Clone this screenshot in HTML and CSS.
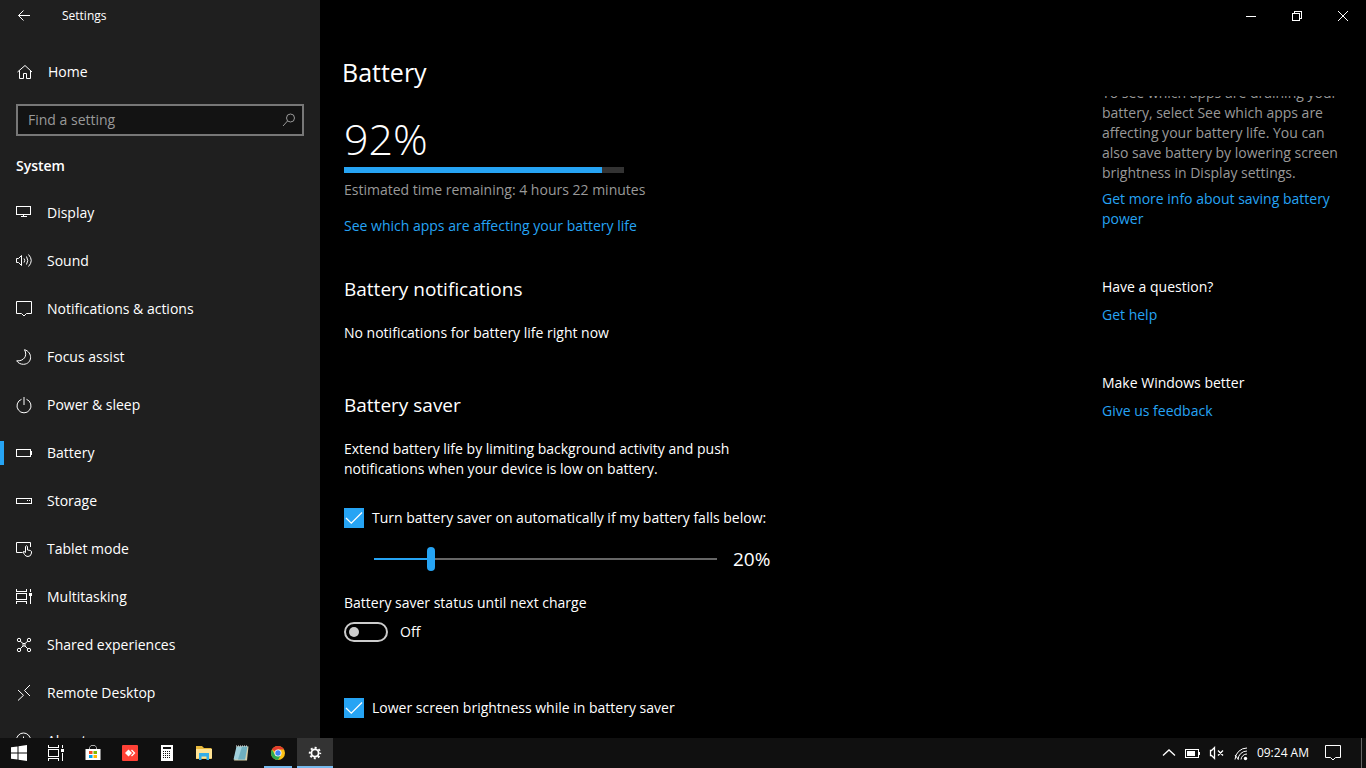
FILE: index.html
```html
<!DOCTYPE html>
<html lang="en">
<head>
    <meta charset="UTF-8">
    <meta name="viewport" content="width=device-width, initial-scale=1">
    <title>Settings</title>
    <link rel="stylesheet" href="styles.css">
</head>
<body>
    <div class="window">
        <aside class="sidebar">
            <div class="title-row">
                <button class="back" type="button" aria-label="Back">
                    <svg class="icon" viewBox="0 0 16 16"><path d="M2.500 7.500H14M7.500 2.500L2.500 7.500L7.500 12.500"/></svg>
                </button>
                <span>Settings</span>
            </div>
            <a class="nav-item home" href="#">
                <svg class="icon" viewBox="0 0 16 16"><path d="M1.500 8L9 1.500L16 8M3.500 6.500V14.500H7.500V9.500H10.500V14.500H14.500V6.500"/></svg>
                <span>Home</span>
            </a>
            <div class="search">
                <input type="text" placeholder="Find a setting" aria-label="Find a setting">
                <svg class="icon" viewBox="0 0 16 16"><circle cx="9.500" cy="6" r="4"/><path d="M6.500 9L2 14"/></svg>
            </div>
            <h2 class="group">System</h2>
            <nav class="nav">
                <a class="nav-item" href="#">
                    <svg class="icon crisp" viewBox="0 0 16 16"><path d="M0.500 1.500H14.500V9.500H0.500ZM7.500 10V11.500M4.500 11.500H10.500"/></svg>
                    <span>Display</span>
                </a>
                <a class="nav-item" href="#">
                    <svg class="icon" viewBox="0 0 16 16"><path d="M0.500 5.500H2.500L5.500 2.500V12.500L2.500 9.500H0.500ZM8 5.500Q9.500 7.500 8 9.500M10.500 3.500Q13 7.500 10.500 11.500M12.500 1.500Q18 7.500 12.500 13.500"/></svg>
                    <span>Sound</span>
                </a>
                <a class="nav-item" href="#">
                    <svg class="icon" viewBox="0 0 16 16"><path d="M0.500 0.500H15.500V12.500H10.500L8 15L5.500 12.500H0.500Z"/></svg>
                    <span>Notifications &amp; actions</span>
                </a>
                <a class="nav-item" href="#">
                    <svg class="icon" viewBox="0 0 16 16"><path d="M8.500 0.700C17 3 16.500 15 7.500 15.300C4.500 15.300 2 14 0.700 11.800C7.500 12.500 12 7 8.500 0.700Z"/></svg>
                    <span>Focus assist</span>
                </a>
                <a class="nav-item" href="#">
                    <svg class="icon" viewBox="0 0 16 16"><path d="M5.500 2.300A7 7 0 1 0 10.500 2.300M8 0V8"/></svg>
                    <span>Power &amp; sleep</span>
                </a>
                <a class="nav-item active" href="#">
                    <svg class="icon crisp" viewBox="0 0 16 16"><path d="M0.500 4.500H14.500V11.500H0.500ZM15.500 6V10"/></svg>
                    <span>Battery</span>
                </a>
                <a class="nav-item" href="#">
                    <svg class="icon crisp" viewBox="0 0 16 16"><path d="M0.500 5.500H15.500V10.500H0.500ZM11 7.500H12M13 7.500H14"/></svg>
                    <span>Storage</span>
                </a>
                <a class="nav-item" href="#">
                    <svg class="icon" viewBox="0 0 16 16"><path d="M6.500 11.500H0.500V1.500H14.500V6M9.500 11.500V5.500Q10.500 4 11.500 5.500V9L14.500 9.500Q15.500 10 15.500 11V12Q15 15.500 12 15.500Q9.500 15.500 8.500 13.500L7 11Q7.500 9.500 9.500 11.500"/></svg>
                    <span>Tablet mode</span>
                </a>
                <a class="nav-item" href="#">
                    <svg class="icon crisp" viewBox="0 0 16 16"><path d="M0.500 0V2.500H10.500V0M0.500 4.500H10.500V10.500H0.500ZM0.500 15V12.500H10.500V15M14.500 0V3M14.500 7V15"/><path class="solid" d="M13 4H16V7H13Z"/></svg>
                    <span>Multitasking</span>
                </a>
                <a class="nav-item" href="#">
                    <svg class="icon" viewBox="0 0 16 16"><circle cx="3" cy="3" r="1.700"/><circle cx="13" cy="3" r="1.700"/><circle cx="3" cy="13" r="1.700"/><circle cx="13" cy="13" r="1.700"/><path d="M4.200 4.200L7 6.500H9L11.800 4.200M4.200 11.800L7 9H9L11.800 11.800M7 6.500V9M9 6.500V9"/></svg>
                    <span>Shared experiences</span>
                </a>
                <a class="nav-item" href="#">
                    <svg class="icon" viewBox="0 0 16 16"><path d="M2 5L7.500 10.300L2 15.500M14 0L8.500 5.500L14 11"/></svg>
                    <span>Remote Desktop</span>
                </a>
                <a class="nav-item" href="#">
                    <svg class="icon" viewBox="0 0 16 16"><circle cx="7.500" cy="7" r="7"/><path d="M7.500 3.500V5M7.500 6V11"/></svg>
                    <span>About</span>
                </a>
            </nav>
        </aside>

        <main class="main">
            <div class="window-buttons">
                <button type="button" aria-label="Minimize"><svg class="caption crisp" viewBox="0 0 10 10"><path d="M0 5.500H10"/></svg></button>
                <button type="button" aria-label="Restore"><svg class="caption crisp" viewBox="0 0 10 10"><path d="M0.500 2.500H7.500V9.500H0.500ZM2.500 2V0.500H9.500V7.500H8"/></svg></button>
                <button type="button" aria-label="Close"><svg class="caption" viewBox="0 0 10 10"><path d="M0 0L10 10M10 0L0 10"/></svg></button>
            </div>
            <h1 class="page-title">Battery</h1>
            <div class="columns">
                <div class="content">
                    <div class="level">92%</div>
                    <div class="level-bar"><div class="level-fill" style="width: 92%"></div></div>
                    <p class="muted estimate">Estimated time remaining: 4 hours 22 minutes</p>
                    <a class="usage-link" href="#">See which apps are affecting your battery life</a>

                    <h2>Battery notifications</h2>
                    <p>No notifications for battery life right now</p>

                    <h2 class="saver-title">Battery saver</h2>
                    <p>Extend battery life by limiting background activity and push notifications when your device is low on battery.</p>

                    <label class="check first-check">
                        <input type="checkbox" checked>
                        <span>Turn battery saver on automatically if my battery falls below:</span>
                    </label>
                    <div class="slider">
                        <input type="range" min="5" max="100" value="20" aria-label="Battery saver threshold">
                        <output>20%</output>
                    </div>
                    <label for="saver-status">Battery saver status until next charge</label>
                    <div class="toggle">
                        <input type="checkbox" role="switch" id="saver-status">
                        <span>Off</span>
                    </div>
                    <label class="check">
                        <input type="checkbox" checked>
                        <span>Lower screen brightness while in battery saver</span>
                    </label>
                </div>

                <aside class="help">
                    <p class="muted tip">To see which apps are draining your battery, select See which apps are affecting your battery life. You can also save battery by lowering screen brightness in Display settings.</p>
                    <a href="#">Get more info about saving battery power</a>
                    <h3>Have a question?</h3>
                    <a href="#">Get help</a>
                    <h3>Make Windows better</h3>
                    <a href="#">Give us feedback</a>
                </aside>
            </div>
        </main>
    </div>

    <footer class="taskbar">
        <button class="task start" type="button" aria-label="Start">
            <svg class="app" viewBox="0 0 16 16"><path fill="#fff" d="M0 2.300L6.500 1.400V7.500H0ZM7.500 1.200L16 0V7.500H7.500ZM0 8.500H6.500V14.600L0 13.700ZM7.500 8.500H16V16L7.500 14.800Z"/></svg>
        </button>
        <button class="task" type="button" aria-label="Task view">
            <svg class="icon crisp" viewBox="0 0 16 16"><path d="M0.500 0V2.500H10.500V0M0.500 4.500H10.500V11.500H0.500ZM0.500 16V13.500H10.500V16M14.500 0V3M14.500 8V16"/><path class="solid" d="M13 4H16V7H13Z"/></svg>
        </button>
        <button class="task" type="button" aria-label="Microsoft Store">
            <svg class="app" viewBox="0 0 16 16"><path fill="none" stroke="#aaa" d="M4.500 4V2.500L6 0.500H10L11.500 2.500V4"/><path fill="#fff" d="M0.500 4H15.500V15H0.500Z"/><path fill="#f25022" d="M4 6H7.500V9H4Z"/><path fill="#7fba00" d="M8.500 6H12V9H8.500Z"/><path fill="#00a4ef" d="M4 10H7.500V13H4Z"/><path fill="#ffb900" d="M8.500 10H12V13H8.500Z"/></svg>
        </button>
        <button class="task" type="button" aria-label="AnyDesk">
            <svg class="app" viewBox="0 0 16 16"><rect width="16" height="16" rx="1" fill="#ff4136"/><path fill="#fff" d="M6.500 4.500L10 8L6.500 11.500L3 8Z"/><path fill="none" stroke="#fff" stroke-width="1.300" d="M9.500 5L12.500 8L9.500 11"/></svg>
        </button>
        <button class="task" type="button" aria-label="Calculator">
            <svg class="app crisp" viewBox="0 0 16 16"><path fill="#fff" d="M2 0H14V16H2Z"/><path fill="#101010" d="M4 2H12V4H4Z"/><path stroke="#101010" stroke-dasharray="1 1" d="M4 6.500H12M4 8.500H12M4 10.500H12M4 12.500H12"/></svg>
        </button>
        <button class="task" type="button" aria-label="File Explorer">
            <svg class="app" viewBox="0 0 16 16"><path fill="#e8b93c" d="M0 1H6L8 3H15.500V14H0Z"/><path fill="#ffe394" d="M0 4H16V13.500H0Z"/><path fill="#35aee8" d="M3 8H13V15H10.500V11.500H5.500V15H3Z"/></svg>
        </button>
        <button class="task" type="button" aria-label="Notepad">
            <svg class="app" viewBox="0 0 16 16"><path fill="#d8cfa8" d="M4 1.500H15.500L14 15.500H1Z"/><path fill="#9fcfdb" d="M3.500 1.500H14.500L12 14.500H0.500Z"/><path fill="#6fb0c0" d="M9 1.500H14.500L12 14.500H5Z"/><path fill="none" stroke="#eee" stroke-dasharray="1 1" d="M3 1H15"/></svg>
        </button>
        <button class="task running" type="button" aria-label="Google Chrome">
            <svg class="app" viewBox="0 0 16 16"><circle cx="8" cy="8" r="7" fill="#fbc116"/><path fill="#e33b2e" d="M8 8L1.940 4.500A7 7 0 0 1 14.060 4.500H8Z"/><path fill="#2da94f" d="M1.940 4.500A7 7 0 0 0 8 15L11 9.800L8 8L5 9.800Z"/><circle cx="8" cy="8" r="3.500" fill="#fff"/><circle cx="8" cy="8" r="2.700" fill="#4285f4"/></svg>
        </button>
        <button class="task running current" type="button" aria-label="Settings">
            <svg class="app" viewBox="0 0 16 16" fill="none" stroke="#fff"><circle cx="8" cy="8" r="3.600" stroke-width="1.800"/><circle cx="8" cy="8" r="5.200" stroke-width="2" stroke-dasharray="2 2.084" stroke-dashoffset="1"/></svg>
        </button>

        <div class="tray">
            <button type="button" aria-label="Show hidden icons"><svg class="icon bold" viewBox="0 0 16 16"><path d="M2 10.500L8 5L14 10.500"/></svg></button>
            <button type="button" aria-label="Battery status"><svg class="icon crisp" viewBox="0 0 16 16"><path d="M0.500 4.500H13.500V12.500H0.500ZM14.500 7V10"/><path class="solid" d="M2 6H10V11H2Z"/></svg></button>
            <button type="button" aria-label="Volume muted"><svg class="icon bold" viewBox="0 0 16 16"><path d="M1.500 5.500H2.500L5.500 2.500V13.500L2.500 10.500H1.500ZM9 5.500L14 10.500M14 5.500L9 10.500"/></svg></button>
            <button class="network" type="button" aria-label="Network"><svg class="icon" viewBox="0 0 16 16"><path d="M2 14.500A12 12 0 0 1 14 3M5 14.500A9 9 0 0 1 14 6M8 14.500A6 6 0 0 1 14 9"/><path d="M2 10L5.500 14.500"/><circle class="solid" cx="12.500" cy="13.500" r="1.700"/></svg></button>
            <time>09:24 AM</time>
            <button class="action-center" type="button" aria-label="Action center"><svg class="icon" viewBox="0 0 16 16"><path d="M0.500 0.500H15.500V12.500H10.500L8 15L5.500 12.500H0.500Z"/></svg></button>
            <button class="show-desktop" type="button" aria-label="Show desktop"></button>
        </div>
    </footer>
</body>
</html>
```
FILE: styles.css
```css
* {
    box-sizing: border-box;
}

body {
    margin: 0;
    height: 100vh;
    display: flex;
    flex-direction: column;
    overflow: hidden;
    background: #000;
    color: #fff;
    font-family: "Open Sans", "Noto Sans", sans-serif;
    font-size: 14px;
    line-height: 20px;
}

h1, h2, h3, p {
    margin: 0;
    font-weight: 400;
}

a {
    color: #26a4f4;
    text-decoration: none;
}

button {
    display: flex;
    align-items: center;
    justify-content: center;
    padding: 0;
    border: none;
    background: none;
    color: inherit;
}

.icon, .caption {
    width: 16px;
    height: 16px;
    flex: none;
    fill: none;
    stroke: currentColor;
    overflow: visible;
}

.caption {
    width: 10px;
    height: 10px;
}

.bold {
    stroke-width: 1.3;
}

.crisp {
    shape-rendering: crispEdges;
}

.solid {
    fill: currentColor;
    stroke: none;
}

.window {
    flex: 1;
    min-height: 0;
    display: flex;
}

/* Sidebar */
.sidebar {
    width: 320px;
    flex: none;
    overflow: hidden;
    background: #1f1f1f;
}

.title-row {
    display: flex;
    align-items: center;
    height: 32px;
    margin-bottom: 16px;
    font-size: 12px;
}

.back {
    width: 48px;
    height: 32px;
    margin-right: 14px;
}

.nav-item {
    display: flex;
    align-items: center;
    gap: 15px;
    height: 48px;
    padding: 0 16px;
    color: #fff;
}

    .nav-item.home {
        gap: 16px;
    }

    .nav-item.active {
        background: linear-gradient(#26a4f4, #26a4f4) left center / 4px 24px no-repeat;
    }

.search {
    display: flex;
    align-items: center;
    height: 32px;
    margin: 8px 16px 20px;
    padding: 0 5px 0 10px;
    border: 2px solid #777;
    background: #131313;
    color: #999;
}

    .search input {
        flex: 1;
        min-width: 0;
        padding: 0;
        border: none;
        outline: none;
        background: none;
        color: #fff;
        font: inherit;
    }

    .search input::placeholder {
        color: #999;
    }

.group {
    margin: 0 16px 13px;
    font-size: 14px;
    font-weight: 600;
}

/* Main page */
.main {
    flex: 1;
    min-width: 0;
    display: flex;
    flex-direction: column;
}

.window-buttons {
    display: flex;
    justify-content: flex-end;
}

    .window-buttons button {
        width: 46px;
        height: 32px;
    }

.page-title {
    height: 64px;
    padding: 22px 22px 0;
    font-size: 25px;
    line-height: 36px;
}

.columns {
    flex: 1;
    min-height: 0;
    display: flex;
    justify-content: space-between;
    padding: 0 24px;
    overflow: hidden;
}

.content {
    width: 428px;
    padding-top: 19px;
}

    .content h2 {
        margin: 39px 0 20px;
        font-size: 19px;
        line-height: 28px;
    }

    .content .saver-title {
        margin-top: 48px;
    }

.level {
    font-size: 43px;
    font-weight: 300;
    line-height: 48px;
}

.level-bar {
    width: 280px;
    height: 6px;
    margin-top: 4px;
    background: #333;
}

.level-fill {
    height: 6px;
    background: #26a4f4;
}

.muted {
    color: #999;
}

.estimate {
    margin: 7px 0 16px;
}

.check {
    display: flex;
    align-items: center;
    gap: 8px;
    white-space: nowrap;
}

    .check input {
        appearance: none;
        width: 20px;
        height: 20px;
        margin: 0;
        border: 2px solid #999;
    }

    .check input:checked {
        border: none;
        background: #26a4f4 url("data:image/svg+xml,%3Csvg xmlns='http://www.w3.org/2000/svg' viewBox='0 0 20 20'%3E%3Cpath d='M2 10L7.300 15.200L18 4.500' fill='none' stroke='white' stroke-width='1.300'/%3E%3C/svg%3E");
    }

.first-check {
    margin-top: 29px;
}

.slider {
    display: flex;
    align-items: center;
    gap: 16px;
    margin: 19px 0 22px 30px;
}

    .slider input {
        appearance: none;
        width: 343px;
        height: 24px;
        margin: 0;
        background: linear-gradient(to right, #26a4f4 16%, #666 16%) center / 100% 2px no-repeat;
    }

    .slider input::-webkit-slider-thumb {
        appearance: none;
        width: 8px;
        height: 24px;
        border-radius: 4px;
        background: #26a4f4;
    }

    .slider output {
        font-size: 19px;
        line-height: 24px;
    }

.toggle {
    display: flex;
    align-items: center;
    gap: 12px;
    margin: 9px 0 56px;
}

    .toggle input {
        appearance: none;
        display: flex;
        align-items: center;
        width: 44px;
        height: 20px;
        margin: 0;
        padding-left: 3px;
        border: 2px solid #ccc;
        border-radius: 10px;
    }

    .toggle input::before {
        content: "";
        width: 10px;
        height: 10px;
        border-radius: 5px;
        background: #ccc;
    }

.help {
    width: 240px;
    flex: none;
}

    /* scrolled up under the page title */
    .help .tip {
        margin: -13px 0 6px;
    }

    .help h3 {
        margin: 48px 0 8px;
        font-size: 14px;
    }

/* Taskbar */
.taskbar {
    display: flex;
    gap: 1px;
    height: 30px;
    flex: none;
    background: #101010;
}

.task {
    width: 36px;
}

    .task.start {
        width: 37px;
    }

.app {
    width: 16px;
    height: 16px;
    overflow: visible;
}

.running {
    background: linear-gradient(#76b9ed, #76b9ed) center bottom / 28px 2px no-repeat;
}

.current {
    background-color: #333;
    background-size: 36px 2px;
}

.tray {
    display: flex;
    align-items: center;
    gap: 8px;
    margin-left: auto;
    font-size: 12px;
}

    .tray .action-center {
        margin: 0 12px 0 8px;
    }

.show-desktop {
    width: 5px;
    height: 30px;
    border-left: 1px solid #666;
}
```
